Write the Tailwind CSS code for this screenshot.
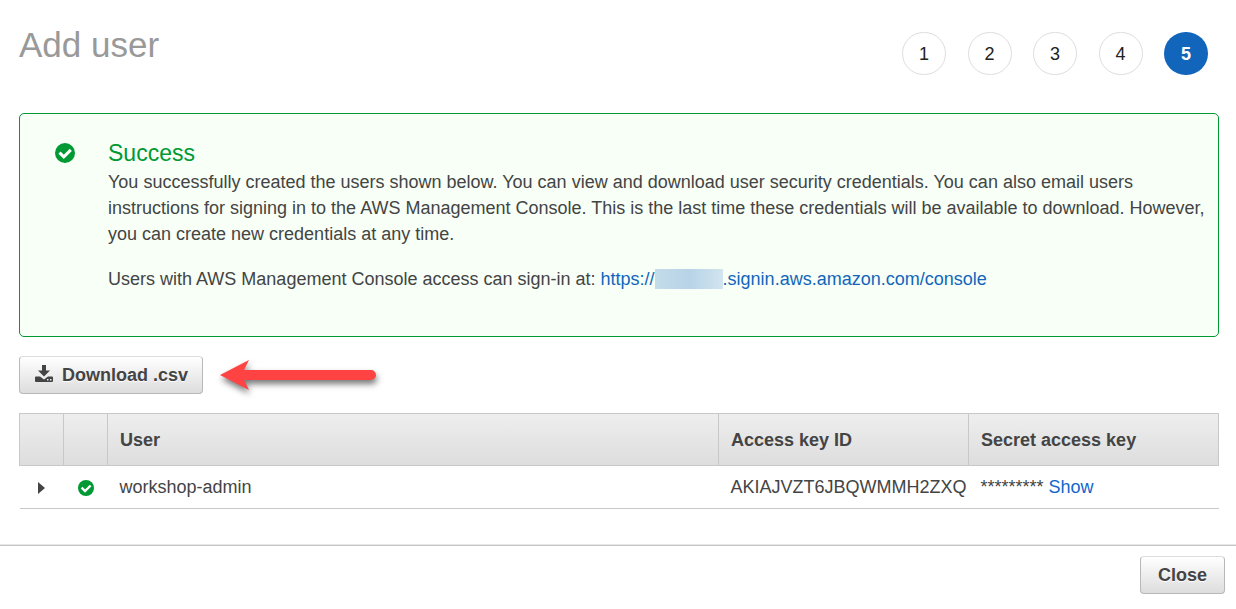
<!DOCTYPE html>
<html lang="en">
<head>
<meta charset="utf-8">
<meta name="viewport" content="width=device-width, initial-scale=1">
<title>Add user</title>
<script src="https://cdn.jsdelivr.net/npm/@tailwindcss/browser@4"></script>
</head>
<body class="bg-white font-['Liberation_Sans',Arial,sans-serif] text-[18px] leading-[26px] text-[#444]">
<svg class="hidden" aria-hidden="true">
  <symbol id="check" viewBox="0 0 20 20">
    <circle cx="10" cy="10" r="10" fill="#009933"/>
    <path d="M4.500 9.600 8.800 13.900 15.800 6.900" fill="none" stroke="#fff" stroke-width="3"/>
  </symbol>
</svg>
<main class="px-[19px] pr-[17px]">
  <header class="flex items-start justify-between pt-[25px] pr-[11px]">
    <h1 class="text-[35px] leading-[40px] text-[#999]">Add user</h1>
    <ol class="mt-[7px] flex w-[306px] justify-between text-[#222]">
      <li class="flex h-[43px] w-[44px] items-center justify-center rounded-full border border-[#ddd]">1</li>
      <li class="flex h-[43px] w-[44px] items-center justify-center rounded-full border border-[#ddd]">2</li>
      <li class="flex h-[43px] w-[44px] items-center justify-center rounded-full border border-[#ddd]">3</li>
      <li class="flex h-[43px] w-[44px] items-center justify-center rounded-full border border-[#ddd]">4</li>
      <li aria-current="step" class="flex h-[43px] w-[44px] items-center justify-center rounded-full bg-[#1166bb] font-bold text-white">5</li>
    </ol>
  </header>

  <section class="mt-[38px] flex rounded-[5px] border border-[#009933] bg-[#f7fff7] pt-[25px] pr-[12px] pb-[44px] pl-[35px]">
    <svg class="mt-1 mr-[33px] size-5 shrink-0" aria-hidden="true"><use href="#check"/></svg>
    <div>
      <h2 class="mb-px text-[23px] leading-[29px] text-[#009933]">Success</h2>
      <p>You successfully created the users shown below. You can view and download user security credentials. You can also email users instructions for signing in to the AWS Management Console. This is the last time these credentials will be available to download. However, you can create new credentials at any time.</p>
      <p class="mt-[19px]">Users with AWS Management Console access can sign-in at: <a href="#" class="text-[#1166bb]">https://<span class="inline-block h-5 w-[68px] bg-linear-to-r from-[#c4dcea] via-[#b8d3e8] to-[#d2e4ef] align-[-4px]"></span>.signin.aws.amazon.com/console</a></p>
    </div>
  </section>

  <div class="mt-[19px] flex items-center gap-[17px]">
    <button type="button" class="flex h-[38px] items-center gap-[9px] rounded-[4px] border border-[#b8b8b8] border-t-[#ddd] bg-linear-to-b from-white to-[#ddd] pr-[14px] pl-[15px] font-bold [text-shadow:0_1px_0_#fff]">
      <svg class="mb-1 h-[17px] w-[18px]" viewBox="0 0 18 17" fill="#444" aria-hidden="true">
        <path d="M7 0h4v5.500h4L9 11.500 3 5.500h4z"/>
        <path fill-rule="evenodd" d="M1 11.500h4L9 14.500l4-3H17q1 0 1 1V16q0 1-1 1H1q-1 0-1-1v-3.500q0-1 1-1zM12 14v1.500h1.500V14zM15 14v1.500h1.500V14z"/>
      </svg>
      Download .csv
    </button>
    <svg class="h-[38px] w-[165px] overflow-visible" viewBox="0 0 165 38" aria-hidden="true">
      <path class="drop-shadow-[1px_4px_3px_#0008]" d="M0 19 29 4 24 14H151a5 5 0 0 1 0 10H24L29 34z" fill="#ff4343"/>
    </svg>
  </div>

  <table class="mt-[19px] w-full table-fixed border-collapse text-left">
    <colgroup><col class="w-[44px]"><col class="w-[44px]"><col><col class="w-[250px]"><col class="w-[250px]"></colgroup>
    <thead>
      <tr class="h-[52px] bg-linear-to-b from-[#eee] to-[#ddd]">
        <th class="border border-[#c8c8c8]"></th>
        <th class="border border-[#c8c8c8]"></th>
        <th class="border border-[#c8c8c8] px-3">User</th>
        <th class="border border-[#c8c8c8] px-3">Access key ID</th>
        <th class="border border-[#c8c8c8] px-3">Secret access key</th>
      </tr>
    </thead>
    <tbody>
      <tr class="h-[43px] border-b border-[#c8c8c8]">
        <td><button type="button" aria-label="Expand workshop-admin" class="flex w-full justify-center pt-px"><svg class="h-[12px] w-[7px]" viewBox="0 0 7 12" fill="#444"><path d="M0 0 7 6 0 12z"/></svg></button></td>
        <td><svg class="mx-auto mt-px size-4" role="img" aria-label="Success"><use href="#check"/></svg></td>
        <td class="px-3">workshop-admin</td>
        <td class="px-3 pr-0">AKIAJVZT6JBQWMMH2ZXQ</td>
        <td class="px-3">********* <a href="#" class="text-[#1166cc]">Show</a></td>
      </tr>
    </tbody>
  </table>
</main>
<footer class="mt-[35px] border-t border-[#e8e8e8]">
  <div class="flex justify-end border-t border-[#c4c4c4] px-[11px] pt-[10px] pb-[15px]">
    <button type="button" class="h-[38px] rounded-[4px] border border-[#b8b8b8] border-t-[#ddd] bg-linear-to-b from-white to-[#ddd] px-[17px] font-bold [text-shadow:0_1px_0_#fff]">Close</button>
  </div>
</footer>
</body>
</html>
